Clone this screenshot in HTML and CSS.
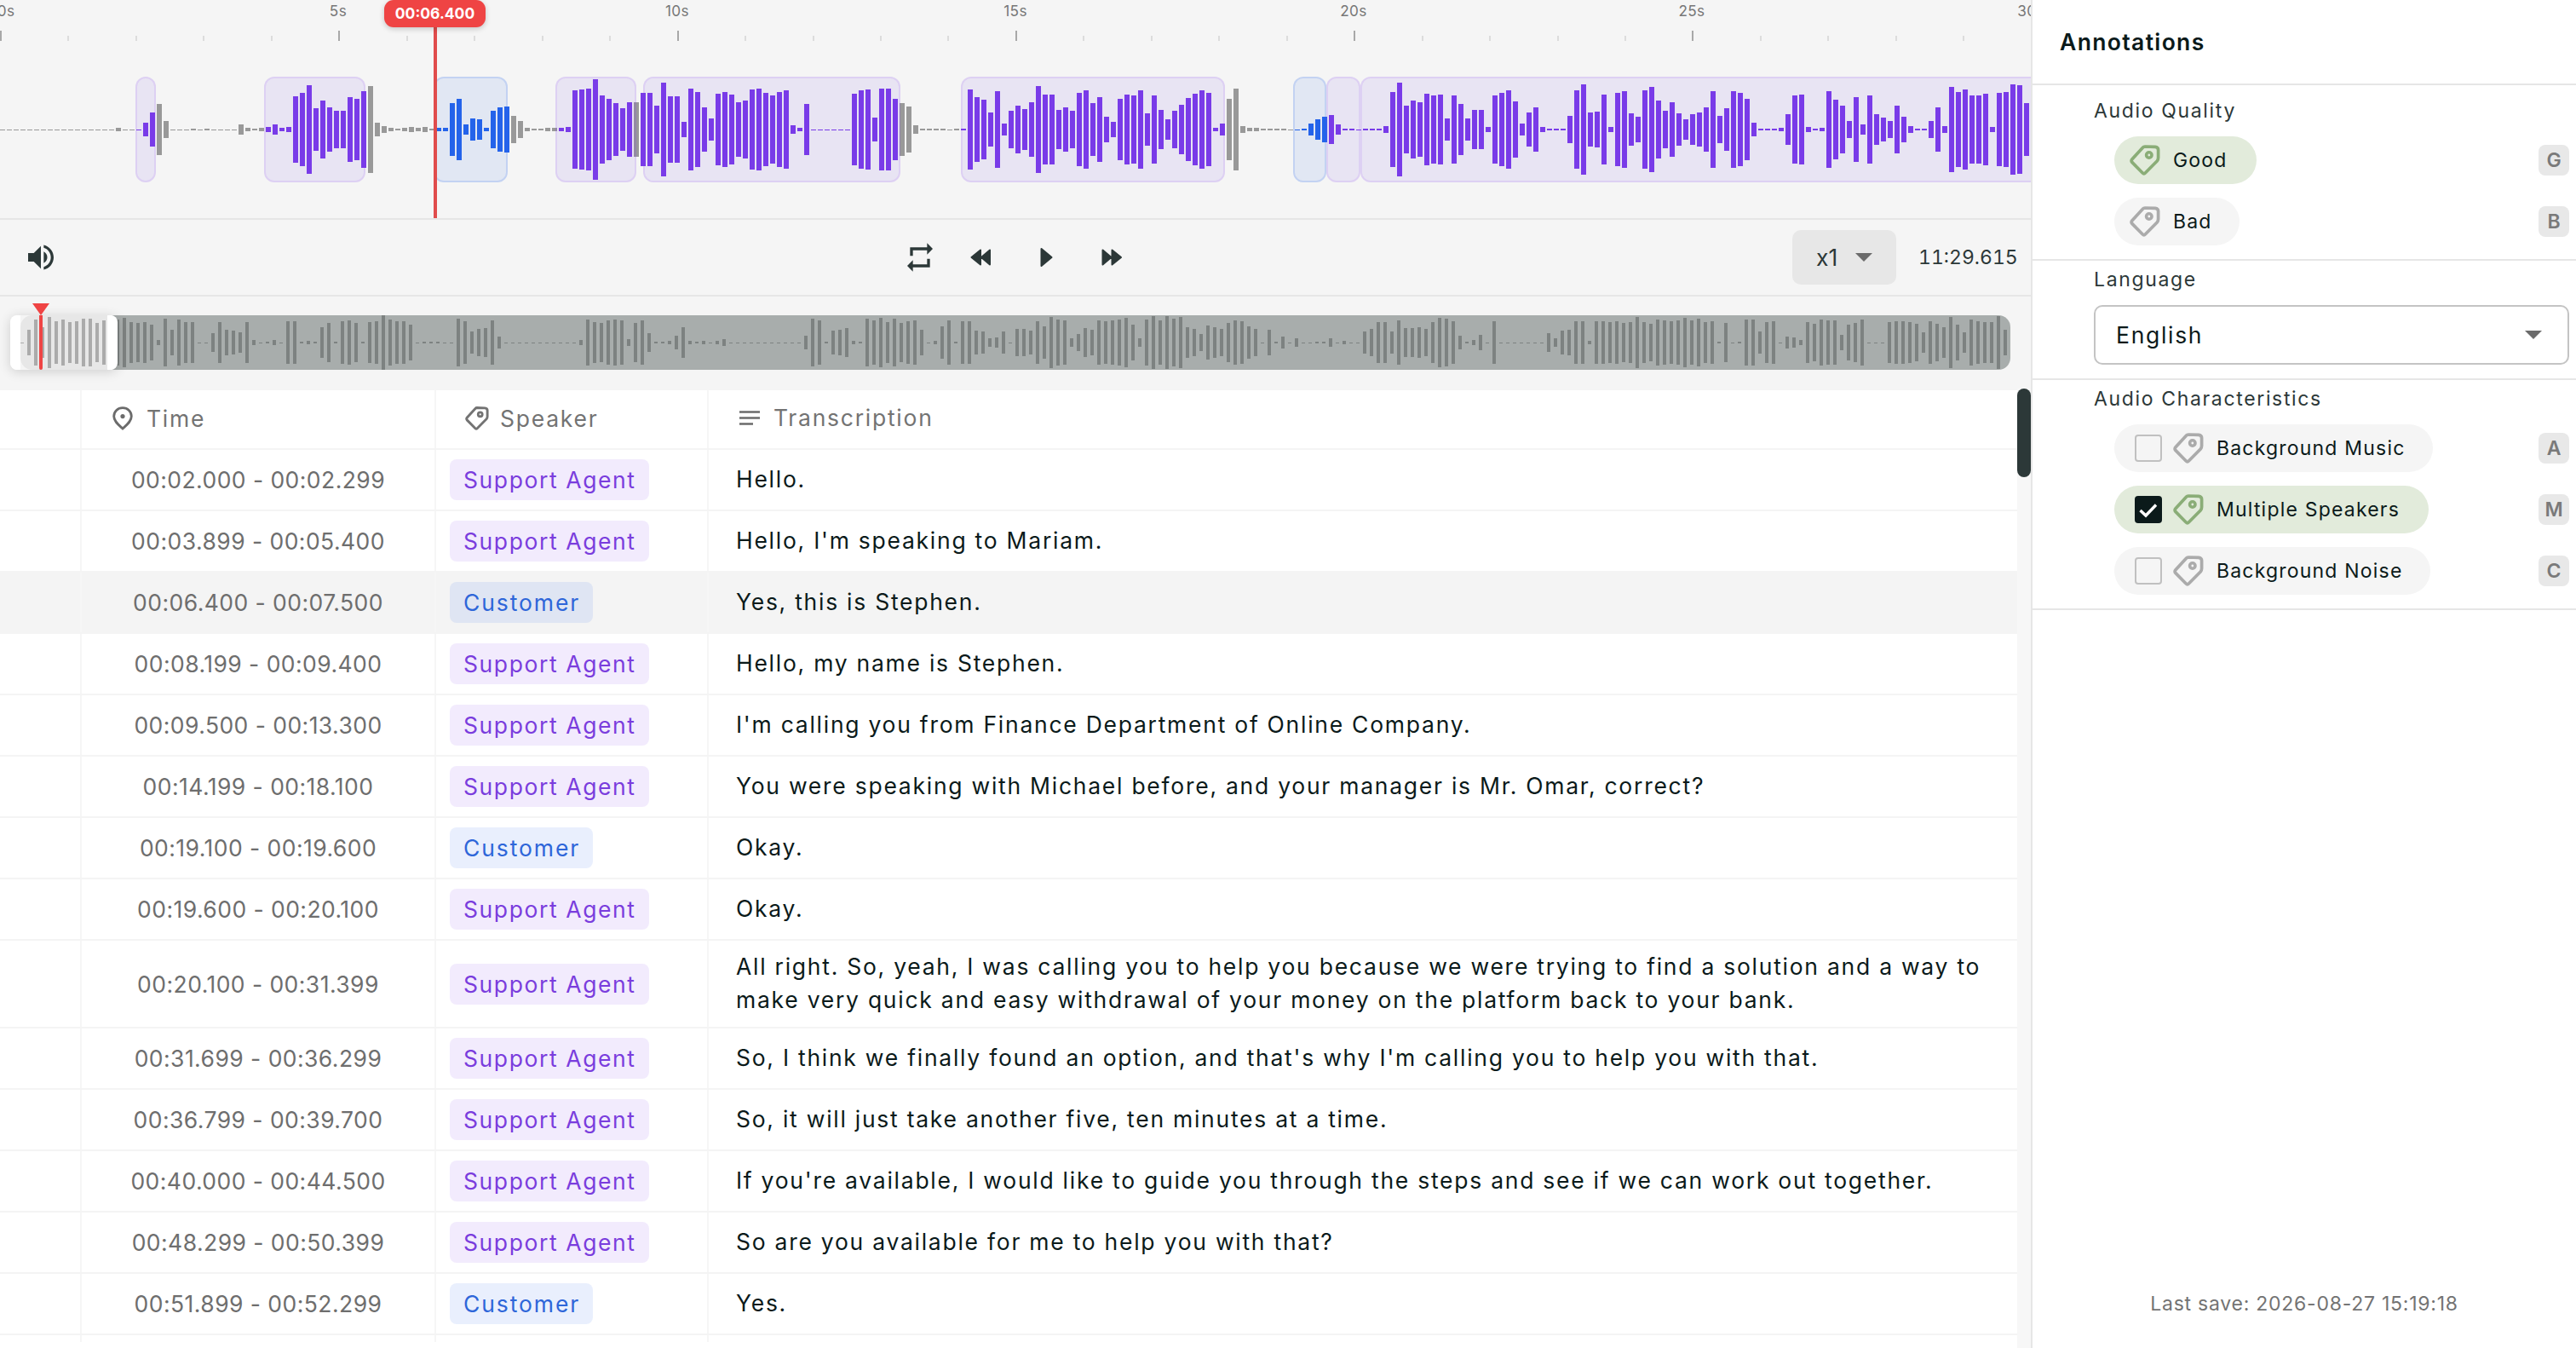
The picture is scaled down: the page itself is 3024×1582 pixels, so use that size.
FILE: index.html
```html
<!DOCTYPE html>
<html lang="en">
    <head>
        <meta charset="UTF-8" />
        <title>Audio annotation</title>
        <link rel="stylesheet" href="styles.css">
    </head>
    <body>
        <!-- shared icons -->
        <svg class="defs">
            <symbol id="tag" viewBox="0 0 36 36">
                <path d="M18 2 L30 2.4 Q33.6 2.8 33.6 6 L33.6 15 Q33.6 17.4 32.2 19 L18.6 32.8 Q16.8 34.6 15 32.8 L2.8 20.4 Q1.4 18.6 3 16.8 L15.4 3.2 Q16.4 2 18 2 Z" fill="none" stroke="currentColor" stroke-width="3.7" stroke-linejoin="round" />
                <circle cx="22.8" cy="12" r="3.2" fill="none" stroke="currentColor" stroke-width="3.6" />
            </symbol>
        </svg>

        <div class="app">
            <main class="editor">
                <!-- zoomed waveform -->
                <section class="timeline">
                    <svg id="wave" width="2384" height="256"></svg>
                    <div class="regions" id="regions"></div>
                    <div class="playhead"><span>00:06.400</span></div>
                </section>

                <!-- player controls -->
                <section class="controls">
                    <svg class="icon volume" viewBox="0 0 24 24"><path d="M3 9v6h4l5 5V4L7 9H3zm13.5 3c0-1.77-1.02-3.29-2.5-4.03v8.05c1.48-.73 2.5-2.25 2.5-4.02zM14 3.23v2.06c2.89.86 5 3.54 5 6.71s-2.11 5.85-5 6.71v2.06c4.01-.91 7-4.49 7-8.77s-2.99-7.86-7-8.77z" /></svg>
                    <div class="buttons">
                        <svg class="icon" viewBox="0 0 24 24"><path d="M7 7h10v3l4-4-4-4v3H5v6h2V7zm10 10H7v-3l-4 4 4 4v-3h12v-6h-2v4z" /></svg>
                        <svg class="icon solid" viewBox="0 0 40 40"><path d="M5.500 20 L16 11.500 V28.500 Z M17 20 L27 11.500 V28.500 Z" /></svg>
                        <svg class="icon solid" viewBox="0 0 40 40"><path d="M12.500 10 L24.500 20 L12.500 30 Z" /></svg>
                        <svg class="icon solid" viewBox="0 0 40 40"><path d="M9.500 11.500 L19.500 20 L9.500 28.500 Z M20.500 11.500 L31 20 L20.500 28.500 Z" /></svg>
                    </div>
                    <div class="speed">x1 <i class="caret"></i></div>
                    <span class="duration">11:29.615</span>
                </section>

                <!-- whole file overview -->
                <section class="overview">
                    <div class="track">
                        <svg id="mini" width="2336" height="64"></svg>
                        <div class="window"></div>
                        <div class="needle"></div>
                    </div>
                </section>

                <!-- transcript -->
                <section class="transcript">
                    <div class="table">
                        <div class="row head">
                            <div></div>
                            <div>
                                <svg class="pin" viewBox="0 0 24 28"><path d="M12 1.700 C6.300 1.700 1.700 6 1.700 11.600 C1.700 17.500 7 21.500 12 26 C17 21.500 22.300 17.500 22.300 11.600 C22.300 6 17.700 1.700 12 1.700 Z" /><circle cx="12" cy="11.600" r="2.600" /></svg>
                                Time
                            </div>
                            <div><svg class="tag"><use href="#tag" /></svg>Speaker</div>
                            <div>
                                <svg class="lines" viewBox="0 0 24 18"><path d="M0 1.500H24M0 8.500H24M0 15.500H16" /></svg>
                                Transcription
                            </div>
                        </div>
                        <div class="row"><div></div><div class="time">00:02.000 - 00:02.299</div><div><b class="agent">Support Agent</b></div><p>Hello.</p></div>
                        <div class="row"><div></div><div class="time">00:03.899 - 00:05.400</div><div><b class="agent">Support Agent</b></div><p>Hello, I'm speaking to Mariam.</p></div>
                        <div class="row current"><div></div><div class="time">00:06.400 - 00:07.500</div><div><b class="customer">Customer</b></div><p>Yes, this is Stephen.</p></div>
                        <div class="row"><div></div><div class="time">00:08.199 - 00:09.400</div><div><b class="agent">Support Agent</b></div><p>Hello, my name is Stephen.</p></div>
                        <div class="row"><div></div><div class="time">00:09.500 - 00:13.300</div><div><b class="agent">Support Agent</b></div><p>I'm calling you from Finance Department of Online Company.</p></div>
                        <div class="row"><div></div><div class="time">00:14.199 - 00:18.100</div><div><b class="agent">Support Agent</b></div><p>You were speaking with Michael before, and your manager is Mr. Omar, correct?</p></div>
                        <div class="row"><div></div><div class="time">00:19.100 - 00:19.600</div><div><b class="customer">Customer</b></div><p>Okay.</p></div>
                        <div class="row"><div></div><div class="time">00:19.600 - 00:20.100</div><div><b class="agent">Support Agent</b></div><p>Okay.</p></div>
                        <div class="row tall"><div></div><div class="time">00:20.100 - 00:31.399</div><div><b class="agent">Support Agent</b></div><p>All right. So, yeah, I was calling you to help you because we were trying to find a solution and a way to<br>make very quick and easy withdrawal of your money on the platform back to your bank.</p></div>
                        <div class="row"><div></div><div class="time">00:31.699 - 00:36.299</div><div><b class="agent">Support Agent</b></div><p>So, I think we finally found an option, and that's why I'm calling you to help you with that.</p></div>
                        <div class="row"><div></div><div class="time">00:36.799 - 00:39.700</div><div><b class="agent">Support Agent</b></div><p>So, it will just take another five, ten minutes at a time.</p></div>
                        <div class="row"><div></div><div class="time">00:40.000 - 00:44.500</div><div><b class="agent">Support Agent</b></div><p>If you're available, I would like to guide you through the steps and see if we can work out together.</p></div>
                        <div class="row"><div></div><div class="time">00:48.299 - 00:50.399</div><div><b class="agent">Support Agent</b></div><p>So are you available for me to help you with that?</p></div>
                        <div class="row"><div></div><div class="time">00:51.899 - 00:52.299</div><div><b class="customer">Customer</b></div><p>Yes.</p></div>
                        <div class="row last"><div></div><div></div><div></div><div></div></div>
                    </div>
                    <div class="scrollbar"><div class="thumb"></div></div>
                </section>
            </main>

            <aside class="sidebar">
                <h1>Annotations</h1>

                <section class="group quality">
                    <h2>Audio Quality</h2>
                    <div class="option"><span class="chip on"><svg class="tag"><use href="#tag" /></svg>Good</span><kbd>G</kbd></div>
                    <div class="option"><span class="chip"><svg class="tag"><use href="#tag" /></svg>Bad</span><kbd>B</kbd></div>
                </section>

                <section class="group language">
                    <h2>Language</h2>
                    <div class="select">English <i class="caret"></i></div>
                </section>

                <section class="group traits">
                    <h2>Audio Characteristics</h2>
                    <div class="option"><span class="chip"><i class="box"></i><svg class="tag"><use href="#tag" /></svg>Background Music</span><kbd>A</kbd></div>
                    <div class="option"><span class="chip on"><i class="box checked"><svg viewBox="0 0 32 32"><path d="M6.500 17 L13 23 L25 10.500" /></svg></i><svg class="tag"><use href="#tag" /></svg>Multiple Speakers</span><kbd>M</kbd></div>
                    <div class="option"><span class="chip"><i class="box"></i><svg class="tag"><use href="#tag" /></svg>Background Noise</span><kbd>C</kbd></div>
                </section>

                <footer>Last save: 2026-08-27 15:19:18</footer>
            </aside>
        </div>

        <script src="wave.js"></script>
    </body>
</html>
```
FILE: styles.css
```css
* {
    box-sizing: border-box;
}

body {
    margin: 0;
    font-family: Inter, "Liberation Sans", sans-serif;
    font-size: 26.5px;
    letter-spacing: 1.74px;
    color: #0b1a1a;
    background: #fff;
}

.defs {
    display: none;
}

.app {
    display: flex;
    height: 1582px;
    overflow: hidden;
}

.editor {
    width: 2384px;
    flex: none;
    background: #f5f5f5;
}

/* zoomed waveform */
.timeline {
    position: relative;
    height: 258px;
    overflow: hidden;
    border-bottom: 2px solid #e6e6e6;
}
.timeline svg {
    display: block;
}
.timeline text {
    font-size: 17.2px;
    letter-spacing: 0.4px;
    text-anchor: middle;
    fill: #777;
}
.region {
    position: absolute;
    top: 90px;
    height: 124px;
    border: 2px solid #d8c8f2;
    border-color: rgba(124, 58, 237, 0.2);
    border-radius: 12px;
    background: rgba(110, 70, 230, 0.09);
    background-clip: padding-box;
}
.region.customer {
    border-color: rgba(37, 99, 235, 0.24);
    background-color: rgba(37, 99, 235, 0.09);
}
.playhead {
    position: absolute;
    top: 0;
    left: 509px;
    width: 4px;
    height: 256px;
    background: #e04c4c;
}
.playhead span {
    position: absolute;
    top: 0;
    left: -58px;
    width: 119px;
    height: 32px;
    border-radius: 11px;
    background: #ef4444;
    box-shadow: 0 2px 6px rgba(0, 0, 0, 0.2);
    color: #fff;
    font-size: 17.5px;
    font-weight: 700;
    letter-spacing: 0;
    line-height: 32px;
    text-align: center;
}

/* player controls */
.controls {
    display: flex;
    align-items: center;
    height: 90px;
    padding: 0 17px 0 28px;
    border-bottom: 2px solid #e6e6e6;
    color: #2c3838;
}
.icon {
    width: 40px;
    height: 40px;
    fill: #2c3838;
}
.solid {
    stroke: #2c3838;
    stroke-width: 2;
    stroke-linejoin: round;
}
.buttons {
    display: flex;
    gap: 35px;
    margin-left: 992px;
}
.speed {
    display: flex;
    align-items: center;
    justify-content: space-between;
    width: 122px;
    height: 64px;
    margin-left: auto;
    padding: 0 28px;
    border-radius: 10px;
    background: #e7e7e7;
    letter-spacing: 0;
}
.caret {
    border: 10px solid transparent;
    border-top-color: #6b6b6b;
    border-bottom: 0;
}
.duration {
    width: 115px;
    margin-left: 26px;
    font-size: 23px;
    font-feature-settings: "tnum";
    letter-spacing: 0;
    text-align: right;
    white-space: nowrap;
}

/* overview */
.overview {
    height: 110px;
    padding: 22px 24px;
}
.track {
    position: relative;
    height: 64px;
    border-radius: 0 14px 14px 0;
    background: #a8adac;
}
.track svg {
    display: block;
}
.window {
    position: absolute;
    top: 0;
    left: -12px;
    width: 126px;
    height: 64px;
    border: solid #fff;
    border-width: 0 12px;
    border-radius: 8px;
    box-shadow: 0 2px 14px rgba(0, 0, 0, 0.16);
}
.needle {
    position: absolute;
    top: 0;
    left: 22px;
    width: 4px;
    height: 64px;
    border-radius: 0 0 2px 2px;
    background: #ef4444;
}
.needle::before {
    content: "";
    position: absolute;
    top: -14px;
    left: -8px;
    border: 10px solid transparent;
    border-top: 14px solid #ef4444;
    border-bottom: 0;
}

/* transcript */
.transcript {
    display: flex;
    height: 1124px;
    background: #fff;
}
.table {
    width: 2368px;
}
.row {
    display: grid;
    grid-template-columns: 96px 416px 320px 1fr;
    height: 72px;
    border-bottom: 2px solid #f4f4f4;
}
.row > * {
    display: flex;
    align-items: center;
    margin: 0;
    border-right: 2px solid #f6f6f6;
}
.row > :last-child {
    border-right: 0;
    padding-left: 32px;
    line-height: 39px;
    white-space: nowrap;
}
.row > p {
    padding-bottom: 1px;
}
.row.head {
    height: 70px;
    color: #737373;
}
.row.head > * {
    padding-bottom: 3px;
}
.row.tall {
    height: 103px;
}
.row.last {
    height: 8px;
    border: 0;
}
.row.current {
    background: #f4f4f4;
}
.row .time {
    justify-content: center;
    color: #6e6e6e;
    letter-spacing: 0.45px;
}
.row b {
    height: 48px;
    margin-left: 16px;
    padding: 0 15px 0 16px;
    border-radius: 8px;
    font-weight: 400;
    line-height: 48px;
    letter-spacing: 1.6px;
}
.row .agent {
    background: rgba(124, 58, 237, 0.1);
    color: #7a3ddd;
}
.row .customer {
    background: rgba(37, 99, 235, 0.1);
    color: #2e66d9;
    letter-spacing: 1.9px;
}
.pin {
    width: 24px;
    height: 28px;
    margin: 0 16px 0 36px;
    fill: none;
    stroke: #6b6b6b;
    stroke-width: 2.8;
}
.pin circle {
    fill: #6b6b6b;
    stroke: none;
}
.head .tag {
    width: 28px;
    height: 28px;
    margin: 0 13px 0 34px;
}
.lines {
    width: 24px;
    height: 18px;
    margin: 0 16px 0 4px;
    stroke: #6b6b6b;
    stroke-width: 2.7;
}
.scrollbar {
    width: 16px;
    margin-top: -2px;
    background: #f7f7f7;
}
.thumb {
    height: 104px;
    border-radius: 8px;
    background: #2c3838;
}

/* annotations */
.sidebar {
    display: flex;
    flex-direction: column;
    flex: 1;
    border-left: 2px solid #e6e6e6;
    font-size: 23px;
    letter-spacing: 1.2px;
}
h1 {
    height: 100px;
    margin: 0;
    padding-left: 32px;
    border-bottom: 2px solid #e6e6e6;
    font-size: 26.5px;
    font-weight: 600;
    line-height: 99px;
    letter-spacing: 1.35px;
}
h2 {
    margin: 0;
    font-size: 23px;
    font-weight: 400;
    line-height: 30px;
    letter-spacing: 1.65px;
    color: #2c3838;
}
.group {
    padding: 0 8px 0 72px;
    border-bottom: 2px solid #e6e6e6;
}
.quality {
    height: 206px;
    padding-top: 15px;
}
.language {
    height: 140px;
    padding-top: 7px;
}
.traits {
    height: 270px;
    padding-top: 7px;
}
.option {
    display: flex;
    align-items: center;
    justify-content: space-between;
    margin: 15px 0 16px 24px;
}
.option + .option {
    margin-top: 16px;
}
.chip {
    display: flex;
    align-items: center;
    height: 56px;
    padding: 0 32px 0 18px;
    border-radius: 28px;
    background: #f5f5f5;
}
.chip.on {
    padding-right: 34px;
    background: #e2ebdb;
}
.chip .tag {
    width: 36px;
    height: 36px;
    margin-right: 15px;
    color: #ababab;
}
.chip.on .tag {
    color: #8aad77;
}
kbd {
    width: 36px;
    height: 36px;
    border-radius: 8px;
    background: #e8e8e8;
    color: #7a7a7a;
    font-family: inherit;
    font-size: 23px;
    font-weight: 600;
    letter-spacing: 0;
    line-height: 36px;
    text-align: center;
}
.box {
    width: 32px;
    height: 32px;
    margin: 0 13px 0 6px;
    border: 2px solid #c0c0c0;
    border-radius: 4px;
}
.box.checked {
    border: 0;
    background: #0b1a1a;
}
.box svg {
    display: block;
    fill: none;
    stroke: #fff;
    stroke-width: 3.4;
}
.select {
    display: flex;
    align-items: center;
    justify-content: space-between;
    height: 70px;
    margin-top: 15px;
    padding: 0 30px 0 24px;
    border: 2px solid #c4c4c4;
    border-radius: 10px;
    font-size: 26.5px;
    letter-spacing: 1.7px;
}
footer {
    margin: auto 0 37px;
    text-align: center;
    color: #737373;
    line-height: 30px;
    letter-spacing: 0.75px;
}
```
FILE: wave.js
```javascript
// half height of each bar in px, one bar every 8px
var PEAKS = [
    0,0,0,0,0,0,0,0,0,0,0,0,0,0,0,0,0,2,0,0,
    0,8,20,30,10,0,0,0,1,0,1,0,0,0,0,6,2,1,2,3,
    6,2,3,39,43,52,25,34,26,22,22,38,36,45,51,8,4,2,1,2,
    3,2,3,1,2,2,31,36,6,13,12,2,22,26,27,16,10,2,1,1,
    2,2,2,3,46,47,48,59,40,36,31,25,32,32,43,43,28,55,39,39,
    9,48,44,26,13,42,44,41,32,34,47,48,43,40,44,46,5,2,30,0,
    0,0,0,0,0,42,46,47,14,48,48,36,31,27,5,1,1,1,1,0,
    1,1,47,38,35,20,45,7,22,28,24,32,51,41,41,23,26,22,43,46,
    31,38,15,9,36,41,40,46,19,40,23,12,22,29,37,42,46,43,2,7,
    36,48,4,2,2,1,1,1,1,0,0,1,7,12,15,17,6,1,1,0,
    1,1,1,4,44,55,28,34,32,42,40,41,13,40,30,13,23,23,3,40,
    43,46,33,7,20,26,3,1,1,1,16,46,53,20,21,41,3,43,45,19,
    15,46,50,34,22,32,19,12,18,20,26,45,16,25,45,43,36,8,1,1,
    1,2,18,40,41,3,1,2,45,35,28,10,38,6,40,18,14,10,28,15,
    4,1,1,10,26,4,50,44,47,40,40,42,3,43,44,53,52,31
];

var MINI = [
    0,15,27,18,30,25,27,24,25,28,28,23,26,26,27,29,24,23,24,21,
    3,28,15,27,24,24,0,0,11,24,15,14,12,24,3,0,1,3,0,25,
    25,1,2,1,18,23,1,25,26,23,1,24,25,32,27,25,25,21,0,1,
    1,1,0,0,28,25,13,16,17,26,7,0,0,0,0,0,0,0,0,0,
    0,0,3,27,24,23,26,27,26,4,23,26,11,1,1,2,8,18,2,1,
    2,0,2,4,0,0,0,0,0,0,0,0,0,0,0,8,28,26,1,14,
    15,17,2,1,28,26,29,24,28,23,25,26,15,0,2,19,26,1,25,25,
    14,13,5,6,13,0,16,16,14,25,19,30,27,26,5,10,17,15,26,25,
    26,27,29,21,5,27,31,26,31,28,30,18,16,10,20,18,16,23,26,25,
    19,16,0,15,1,7,0,5,0,0,1,1,5,0,2,0,0,13,16,24,
    24,13,26,17,17,18,16,24,29,28,25,8,1,3,9,0,25,0,0,0,
    0,0,0,0,11,5,14,15,25,25,2,25,25,24,25,23,24,30,24,22,
    27,26,25,26,29,26,28,24,25,1,23,0,1,27,27,13,24,25,0,7,
    6,3,24,22,27,26,26,9,21,23,27,0,0,0,24,25,25,24,22,12,
    25,22,18,30,21,12,27,25,24,24,31,15
];

// seconds, speaker, first and last bar painted in the speaker colour
var REGIONS = [
    [2.0, 2.299, 'agent', 20, 22],
    [3.899, 5.4, 'agent', 39, 53],
    [6.4, 7.5, 'customer', 64, 74],
    [8.199, 9.4, 'agent', 82, 92],
    [9.5, 13.3, 'agent', 94, 131],
    [14.199, 18.1, 'agent', 141, 179],
    [19.1, 19.6, 'customer', 190, 194],
    [19.6, 20.1, 'agent', 195, 199],
    [20.1, 31.399, 'agent', 200, 400]
];
var COLORS = { agent: '#7a3be8', customer: '#2563eb' };
var SECOND = 79.46;

function rect(x, y, w, h, fill) {
    return '<rect x="' + x + '" y="' + y + '" width="' + w + '" height="' + h + '" fill="' + fill + '"/>';
}

function bar(x, mid, half, w, fill) {
    return half ? rect(x, mid - half, w, half * 2, fill) : rect(x, mid, w, 1, fill);
}

// ruler
var out = '';
for (var s = 0; s <= 30; s++) {
    var x = Math.round(s * SECOND);
    if (s % 5 === 0) {
        out += rect(x, 36, 2, 12, '#a8a8a8');
        // first label is nudged in from the edge
        out += '<text x="' + (s ? x : 7) + '" y="19">' + s + 's</text>';
    } else {
        out += rect(x, 42, 2, 6, '#dcdcdc');
    }
}

// bars
PEAKS.forEach(function (half, i) {
    var fill = '#999';
    REGIONS.forEach(function (r) {
        if (i >= r[3] && i <= r[4]) fill = COLORS[r[2]];
    });
    out += bar(i * 8, 152, half, 6, fill);
});
document.getElementById('wave').innerHTML = out;

// speaker regions
document.getElementById('regions').innerHTML = REGIONS.map(function (r) {
    var left = r[0] * SECOND;
    var width = (r[1] - r[0]) * SECOND;
    return '<div class="region ' + r[2] + '" style="left:' + left.toFixed(1) + 'px;width:' + width.toFixed(1) + 'px"></div>';
}).join('');

// overview, the part inside the window is lighter
var mini = rect(0, 0, 108, 64, '#f5f5f5') + '<rect x="0" y="0" width="120" height="64" rx="14" fill="#e7e7e7"/>';
mini += rect(108, 0, 12, 64, '#a8adac');
MINI.forEach(function (half, i) {
    mini += bar(i * 8, 32, half, 4, i < 13 ? '#ababab' : '#7d8281');
});
document.getElementById('mini').innerHTML = mini;
```
